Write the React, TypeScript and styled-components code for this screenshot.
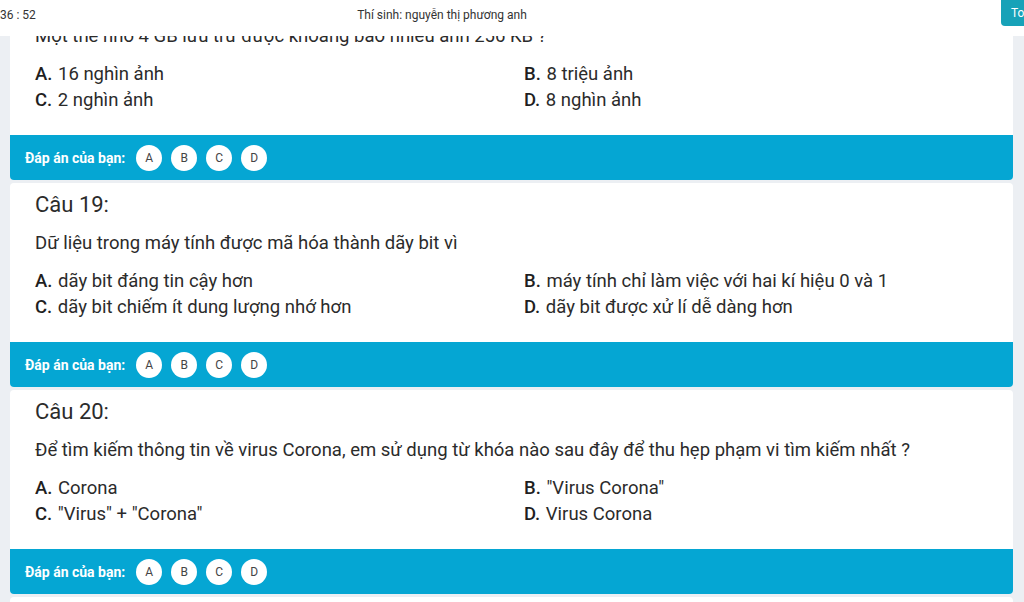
import React, { useLayoutEffect, useRef } from "react";
import styled, { createGlobalStyle } from "styled-components";

const barColor = "#05a6d3";
const textColor = "#2b2b2b";

const GlobalStyle = createGlobalStyle`
  html, body {
    margin: 0;
    padding: 0;
    background: #eceff3;
    font-family: Roboto, "Noto Sans", "Liberation Sans", sans-serif;
    color: ${textColor};
  }
`;

const Viewport = styled.div`
  height: 100vh;
  overflow: hidden;
`;

const Header = styled.div`
  position: fixed;
  top: 0;
  left: 0;
  right: 0;
  height: 36px;
  background: white;
  display: grid;
  grid-template-columns: 340px 204px 457px auto;
  align-items: start;
  overflow: hidden;
  z-index: 10;
  font-size: 12px;
  color: #333;
`;

const Clock = styled.div`
  line-height: 30px;
`;

const Candidate = styled.div`
  line-height: 30px;
  text-align: center;
  white-space: nowrap;
`;

const FinishButton = styled.button`
  height: 26px;
  padding: 0 10px;
  border: none;
  border-radius: 0 0 0 4px;
  background: #17a2b8;
  color: white;
  font-family: inherit;
  font-size: 12px;
  white-space: nowrap;
`;

const List = styled.div`
  display: flex;
  flex-direction: column;
  gap: 3px;
  padding: 0 11px 0 10px;
`;

const Card = styled.div`
  background: white;
  border-radius: 4px;
  display: flex;
  flex-direction: column;
`;

const Body = styled.div`
  padding: 10px 25px 22px;
`;

const Title = styled.div`
  font-size: 22px;
  line-height: 24px;
  margin-bottom: 13px;
`;

const Question = styled.div`
  font-size: 18.5px;
  line-height: 26px;
  margin-bottom: 12px;
`;

const Options = styled.div`
  display: grid;
  grid-template-columns: 489px 1fr;
  font-size: 18.5px;
  line-height: 26px;
`;

const Letter = styled.span`
  font-weight: 500;
  color: #1f1f1f;
  margin-right: 1px;
`;

const AnswerBar = styled.div`
  height: 45px;
  background: ${barColor};
  border-radius: 0 0 4px 4px;
  display: flex;
  align-items: center;
  gap: 9px;
  padding-left: 15px;
`;

const AnswerLabel = styled.span`
  color: white;
  font-weight: 700;
  font-size: 14px;
  margin-right: 2px;
`;

const Choice = styled.span`
  width: 26px;
  height: 26px;
  border-radius: 50%;
  background: white;
  color: #444;
  font-size: 12px;
  display: flex;
  align-items: center;
  justify-content: center;
`;

type Q = {
  no: number;
  text: string;
  options: string[];
};

const questions: Q[] = [
  {
    no: 18,
    text: "Một thẻ nhớ 4 GB lưu trữ được khoảng bao nhiêu ảnh 256 KB ?",
    options: ["16 nghìn ảnh", "8 triệu ảnh", "2 nghìn ảnh", "8 nghìn ảnh"],
  },
  {
    no: 19,
    text: "Dữ liệu trong máy tính được mã hóa thành dãy bit vì",
    options: [
      "dãy bit đáng tin cậy hơn",
      "máy tính chỉ làm việc với hai kí hiệu 0 và 1",
      "dãy bit chiếm ít dung lượng nhớ hơn",
      "dãy bit được xử lí dễ dàng hơn",
    ],
  },
  {
    no: 20,
    text: "Để tìm kiếm thông tin về virus Corona, em sử dụng từ khóa nào sau đây để thu hẹp phạm vi tìm kiếm nhất ?",
    options: ['Corona', '"Virus Corona"', '"Virus" + "Corona"', 'Virus Corona'],
  },
  {
    no: 21,
    text: "Phát biểu nào sau đây là đúng ?",
    options: ["...", "...", "...", "..."],
  },
];

const letters = ["A", "B", "C", "D"];

const QuestionCard = ({ q }: { q: Q }) => (
  <Card>
    <Body>
      <Title>Câu {q.no}:</Title>
      <Question>{q.text}</Question>
      <Options>
        {q.options.map((o, i) => (
          <div key={i}>
            <Letter>{letters[i]}.</Letter> {o}
          </div>
        ))}
      </Options>
    </Body>
    <AnswerBar>
      <AnswerLabel>Đáp án của bạn:</AnswerLabel>
      {letters.map((l) => (
        <Choice key={l}>{l}</Choice>
      ))}
    </AnswerBar>
  </Card>
);

export default function App() {
  const ref = useRef<HTMLDivElement>(null);
  useLayoutEffect(() => {
    // page is scrolled a little, card 18 sits under the header
    if (ref.current) ref.current.scrollTop = 24;
  }, []);

  return (
    <>
      <GlobalStyle />
      <Header>
        <Clock>36 : 52</Clock>
        <Candidate>Thí sinh: nguyễn thị phương anh</Candidate>
        <div />
        <FinishButton>Toàn bài</FinishButton>
      </Header>
      <Viewport ref={ref}>
        <List>
          {questions.map((q) => (
            <QuestionCard key={q.no} q={q} />
          ))}
        </List>
      </Viewport>
    </>
  );
}
